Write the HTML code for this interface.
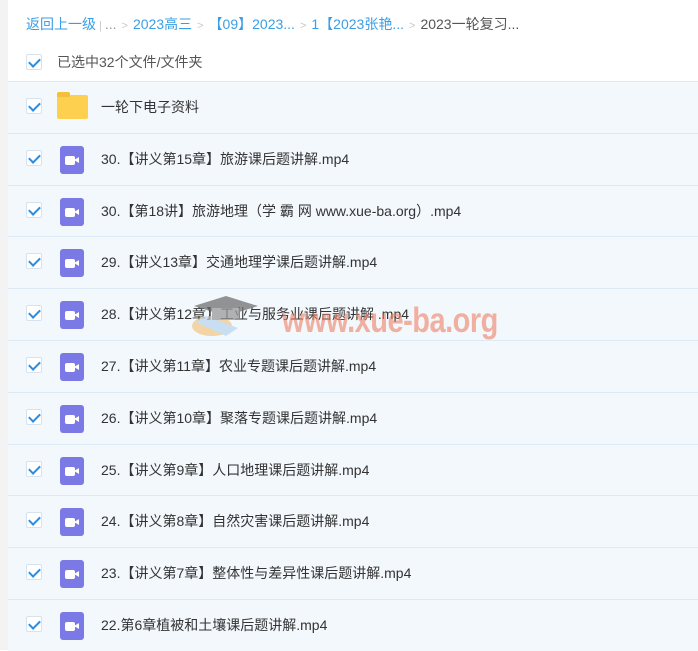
<!DOCTYPE html>
<html><head><meta charset="utf-8"><style>
*{margin:0;padding:0;box-sizing:border-box}
body{width:698px;height:650px;overflow:hidden;background:#fff;font-family:"Liberation Sans","Noto Sans CJK SC",sans-serif;position:relative}
.strip{position:absolute;left:0;top:0;width:8px;height:650px;background:#f3f3f3}
.crumb{position:absolute;left:26px;top:14px;font-size:14px;color:#3a9ee6;white-space:nowrap}
.crumb .g{color:#c8c8c8;font-size:11px;margin:0 5px}
.crumb .d{color:#555}
.sel{position:absolute;left:57px;top:52px;font-size:14px;color:#555}
.cb{position:absolute;width:16px;height:16px;border:1px solid #d6e2ee;border-radius:2px;background:#fff}
.cb:after{content:"";position:absolute;left:4px;top:1px;width:5px;height:9px;border:solid #2c8de0;border-width:0 2.5px 2.5px 0;transform:rotate(45deg)}
.list{position:absolute;left:8px;top:81px;width:690px}
.row{height:51.8px;background:#f3f8fd;border-top:1px solid #dde9f4;position:relative}
.row .cb{left:18px;top:16px}
.row .t{position:absolute;left:93px;top:15px;font-size:14px;color:#333;white-space:nowrap}
.vid{position:absolute;left:52px;top:12px;width:24px;height:28px;background:#7b79e6;border-radius:3px}
.vid i{position:absolute;left:5px;top:10px;width:10px;height:9px;background:#fff;border-radius:2px}
.vid b{position:absolute;left:14px;top:11px;border-right:5px solid #fff;border-top:3.5px solid transparent;border-bottom:3.5px solid transparent}
.fold{position:absolute;left:49px;top:13px;width:31px;height:24px;background:#fdd04f;border-radius:2px}
.fold:before{content:"";position:absolute;left:0;top:-3px;width:13px;height:5px;background:#f5bf38;border-radius:2px 2px 0 0}
.wm{position:absolute;left:282px;top:302px;font:bold 29px "Liberation Sans Narrow","Liberation Sans",sans-serif;color:rgba(236,128,100,.6);transform:scaleY(1.2);transform-origin:left top;letter-spacing:-0.5px}
.hat{position:absolute;left:190px;top:292px;width:72px;height:48px;opacity:.75}
</style></head><body>
<div class="strip"></div>
<div class="crumb">返回上一级<span class="g" style="margin:0 3px">|</span><span style="color:#999">...</span><span class="g">&gt;</span>2023高三<span class="g">&gt;</span>【09】2023...<span class="g">&gt;</span>1【2023张艳...<span class="g">&gt;</span><span class="d">2023一轮复习...</span></div>
<div class="cb" style="left:26px;top:54px"></div>
<div class="sel">已选中32个文件/文件夹</div>
<div class="list">
<div class="row"><div class="cb"></div><div class="fold"></div><div class="t">一轮下电子资料</div></div>
<div class="row"><div class="cb"></div><div class="vid"><i></i><b></b></div><div class="t">30.【讲义第15章】旅游课后题讲解.mp4</div></div>
<div class="row"><div class="cb"></div><div class="vid"><i></i><b></b></div><div class="t">30.【第18讲】旅游地理（学 霸 网 www.xue-ba.org）.mp4</div></div>
<div class="row"><div class="cb"></div><div class="vid"><i></i><b></b></div><div class="t">29.【讲义13章】交通地理学课后题讲解.mp4</div></div>
<div class="row"><div class="cb"></div><div class="vid"><i></i><b></b></div><div class="t">28.【讲义第12章】工业与服务业课后题讲解 .mp4</div></div>
<div class="row"><div class="cb"></div><div class="vid"><i></i><b></b></div><div class="t">27.【讲义第11章】农业专题课后题讲解.mp4</div></div>
<div class="row"><div class="cb"></div><div class="vid"><i></i><b></b></div><div class="t">26.【讲义第10章】聚落专题课后题讲解.mp4</div></div>
<div class="row"><div class="cb"></div><div class="vid"><i></i><b></b></div><div class="t">25.【讲义第9章】人口地理课后题讲解.mp4</div></div>
<div class="row"><div class="cb"></div><div class="vid"><i></i><b></b></div><div class="t">24.【讲义第8章】自然灾害课后题讲解.mp4</div></div>
<div class="row"><div class="cb"></div><div class="vid"><i></i><b></b></div><div class="t">23.【讲义第7章】整体性与差异性课后题讲解.mp4</div></div>
<div class="row"><div class="cb"></div><div class="vid"><i></i><b></b></div><div class="t">22.第6章植被和土壤课后题讲解.mp4</div></div>
</div>
<svg class="hat" viewBox="0 0 72 48"><ellipse cx="22" cy="34" rx="20" ry="10" fill="#f3c98a"/><path d="M6 30 L36 44 L48 36 L16 24Z" fill="#b9d6f0"/><path d="M4 14 L36 4 L68 14 L36 24Z" fill="#707070"/><rect x="22" y="16" width="28" height="12" fill="#9a9a9a"/></svg>
<div class="wm">www.xue-ba.org</div>
</body></html>
